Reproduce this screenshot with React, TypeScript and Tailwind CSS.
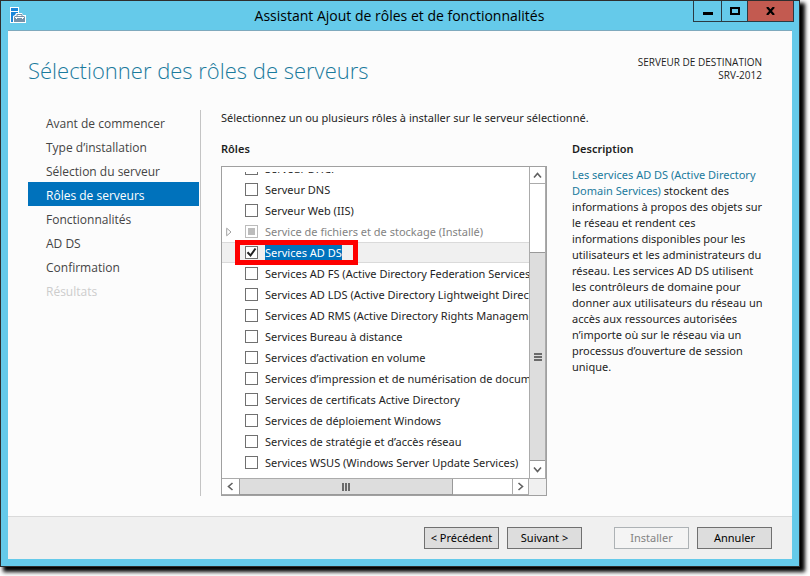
import { useState } from 'react';
import type { ReactNode } from 'react';

interface Role {
    id: string;
    label: string;
    installed?: boolean;
}

const steps = [
    'Avant de commencer',
    'Type d’installation',
    'Sélection du serveur',
    'Rôles de serveurs',
    'Fonctionnalités',
    'AD DS',
    'Confirmation',
    'Résultats',
];

const roles: Role[] = [
    { id: 'dhcp', label: 'Serveur DHCP' },
    { id: 'dns', label: 'Serveur DNS' },
    { id: 'iis', label: 'Serveur Web (IIS)' },
    { id: 'storage', label: 'Service de fichiers et de stockage (Installé)', installed: true },
    { id: 'adds', label: 'Services AD DS' },
    { id: 'adfs', label: 'Services AD FS (Active Directory Federation Services)' },
    { id: 'adlds', label: 'Services AD LDS (Active Directory Lightweight Directory Services)' },
    { id: 'adrms', label: 'Services AD RMS (Active Directory Rights Management Services)' },
    { id: 'rds', label: 'Services Bureau à distance' },
    { id: 'activation', label: 'Services d’activation en volume' },
    { id: 'print', label: 'Services d’impression et de numérisation de documents' },
    { id: 'adcs', label: 'Services de certificats Active Directory' },
    { id: 'wds', label: 'Services de déploiement Windows' },
    { id: 'npas', label: 'Services de stratégie et d’accès réseau' },
    { id: 'wsus', label: 'Services WSUS (Windows Server Update Services)' },
];

const ServerIcon = () => (
    <svg width="16" height="16" viewBox="0 0 16 16" aria-hidden="true">
        <path d="M0 0h9v6h3l1 2h3v8H0z" fill="#fff" />
        <path d="M1 1h7v3H1zM1 5h7v1H6L5 8 3 9v6H1z" fill="#1a86d9" />
        <path d="M5 9h9l1 1v5H4v-5z" fill="#7592aa" />
        <path d="M7 9V7.5h5V9" fill="none" stroke="#7592aa" />
        <path d="M5 10.5h9M6.5 10v2M12.5 10v2" stroke="#fff" />
    </svg>
);

const Chevron = ({ d }: { d: string }) => (
    <svg width="9" height="9" viewBox="0 0 9 9" fill="none" stroke="#606060" strokeWidth="1.6" aria-hidden="true">
        <path d={d} />
    </svg>
);

const ScrollButton = ({ label, d, className }: { label: string; d: string; className: string }) => (
    <button
        type="button"
        aria-label={label}
        className={`flex shrink-0 items-center justify-center border-[#ababab] bg-white ${className}`}
    >
        <Chevron d={d} />
    </button>
);

const DialogButton = ({ children, disabled }: { children: ReactNode; disabled?: boolean }) => (
    <button
        type="button"
        disabled={disabled}
        className="flex h-[22px] w-[75px] items-center justify-center whitespace-nowrap border border-[#707070] bg-[#dddddd] text-black disabled:border-[#adb2b5] disabled:bg-[#f4f4f4] disabled:text-[#838383]"
    >
        {children}
    </button>
);

// Title bar with the caption buttons
const TitleBar = () => (
    <header className="flex h-[29px] items-start pl-[9px] pr-[5px]">
        <div className="mt-1.5 w-24">
            <ServerIcon />
        </div>
        <h1 className="mt-1 flex-1 text-center font-['Open_Sans','Segoe_UI',sans-serif] text-[14px] leading-[22px] text-black">
            Assistant Ajout de rôles et de fonctionnalités
        </h1>
        <div className="flex h-[21px] border-x border-b border-[#2b3a42]">
            <button type="button" aria-label="Réduire" className="flex w-7 items-center justify-center border-r border-[#2b3a42]">
                <span className="mt-1 h-[3px] w-2.5 bg-black" />
            </button>
            <button type="button" aria-label="Agrandir" className="flex w-[26px] items-center justify-center border-r border-[#2b3a42]">
                <span className="h-2 w-2.5 border-2 border-black" />
            </button>
            <button type="button" aria-label="Fermer" className="flex w-[45px] items-center justify-center bg-[#c35a50]">
                <svg width="9" height="8" viewBox="0 0 9 8" stroke="#000" strokeWidth="2.2" aria-hidden="true">
                    <path d="M1 0l7 8M8 0L1 8" />
                </svg>
            </button>
        </div>
    </header>
);

const RoleRow = ({ role, checked, onToggle }: { role: Role; checked: boolean; onToggle: () => void }) => {
    const selected = role.id === 'adds';

    return (
        <li
            className={`relative flex h-[21px] shrink-0 items-center border-y pl-1 ${
                selected ? 'border-[#dadada] bg-[#f0f0f0]' : 'border-transparent'
            }`}
        >
            <span className="w-[19px] shrink-0">
                {role.installed && (
                    <svg width="6" height="10" viewBox="0 0 6 10" fill="#fff" stroke="#a0a0a0" aria-hidden="true">
                        <path d="M.7 1.2v7.6L5 5z" />
                    </svg>
                )}
            </span>
            <span className="relative flex size-[13px] shrink-0">
                <input
                    id={role.id}
                    type="checkbox"
                    checked={checked}
                    disabled={role.installed}
                    onChange={onToggle}
                    className="size-[13px] appearance-none border border-[#707070] bg-white disabled:border-[#bcbcbc]"
                />
                {role.installed && <span className="pointer-events-none absolute inset-[3px] bg-[#bcbcbc]" />}
                {checked && (
                    <svg
                        className="pointer-events-none absolute inset-0"
                        width="13"
                        height="13"
                        viewBox="0 0 13 13"
                        fill="none"
                        stroke="#212121"
                        strokeWidth="2"
                        aria-hidden="true"
                    >
                        <path d="M2.5 6.3l3 3.2 5-7" />
                    </svg>
                )}
            </span>
            <label
                htmlFor={role.id}
                className={`ml-[7px] whitespace-nowrap leading-4 ${
                    selected ? 'bg-[#0072bc] text-white' : role.installed ? 'text-[#838383]' : 'text-[#1e1e1e]'
                }`}
            >
                {role.label}
            </label>
            {selected && (
                <span className="pointer-events-none absolute -top-[3px] left-[13px] h-[25px] w-[123px] border-5 border-[#fe0000]" />
            )}
        </li>
    );
};

const RoleList = () => {
    const [checked, setChecked] = useState<string[]>(['adds']);

    const toggle = (id: string) =>
        setChecked((prev) => (prev.includes(id) ? prev.filter((x) => x !== id) : [...prev, id]));

    return (
        <div className="border border-[#a0a0a0] bg-white">
            <div className="flex">
                <div className="min-w-0 flex-1 py-[5px]">
                    {/* scrolled to the end, so the first row is cut off */}
                    <ul className="flex h-[301px] flex-col justify-end overflow-hidden">
                        {roles.map((role) => (
                            <RoleRow
                                key={role.id}
                                role={role}
                                checked={checked.includes(role.id)}
                                onToggle={() => toggle(role.id)}
                            />
                        ))}
                    </ul>
                </div>
                <div className="flex w-[17px] flex-col border-x border-[#ababab]">
                    <ScrollButton label="Haut" d="M1 6.5L4.5 2.5 8 6.5" className="h-[17px] border-b" />
                    <div className="h-[68px]" />
                    <div className="flex flex-1 flex-col items-center justify-center gap-px border-y border-[#999999] bg-[#dddddd]">
                        <span className="h-0.5 w-2 bg-[#6a6a6a]" />
                        <span className="h-0.5 w-2 bg-[#6a6a6a]" />
                        <span className="h-0.5 w-2 bg-[#6a6a6a]" />
                    </div>
                    <ScrollButton label="Bas" d="M1 2.5L4.5 6.5 8 2.5" className="h-[17px]" />
                </div>
            </div>
            <div className="flex h-[17px] border-t border-[#ababab]">
                <ScrollButton label="Gauche" d="M6.5 1L2.5 4.5 6.5 8" className="w-[17px] border-b" />
                <div className="flex w-[214px] items-center justify-center gap-px border border-t-0 border-[#999999] bg-[#dddddd]">
                    <span className="h-2 w-0.5 bg-[#6a6a6a]" />
                    <span className="h-2 w-0.5 bg-[#6a6a6a]" />
                    <span className="h-2 w-0.5 bg-[#6a6a6a]" />
                </div>
                <div className="flex-1 border-b border-[#ababab]" />
                <ScrollButton label="Droite" d="M2.5 1L6.5 4.5 2.5 8" className="w-[17px] border-x border-b" />
                <div className="w-[17px] bg-[#f0f0f0]" />
            </div>
        </div>
    );
};

const App = () => {
    return (
        <div className="flex min-h-screen overflow-hidden bg-white pb-[9px] pr-2.5 font-['Noto_Sans','Segoe_UI',sans-serif] text-[11px] leading-4 text-[#1e1e1e]">
            <div className="flex min-w-0 flex-1 flex-col border border-[#2e2e2e] bg-[#65caea] shadow-[4px_4px_4px_1px_#000000]">
                <TitleBar />
                <div className="mx-[7px] mb-[7px] flex flex-1 flex-col border-t border-[#7fa9bd] bg-[#fcfcfc]">
                    <div className="flex items-start justify-between pb-6 pl-5 pr-[30px] pt-[23px] font-['Open_Sans','Segoe_UI',sans-serif]">
                        <h2 className="text-[22px] font-light leading-8 text-[#1a7a9c]">
                            Sélectionner des rôles de serveurs
                        </h2>
                        <p className="pt-0.5 text-right text-[10px] leading-[13px]">
                            SERVEUR DE DESTINATION
                            <br />
                            SRV-2012
                        </p>
                    </div>

                    <div className="flex flex-1 pb-5 pl-5">
                        <nav className="w-[173px] shrink-0 border-r border-[#c4c4c4] pr-px font-['Open_Sans','Segoe_UI',sans-serif] text-[12px]">
                            <ul>
                                {steps.map((step) => (
                                    <li key={step}>
                                        <a
                                            href="#"
                                            className={`block h-6 pl-[18px] leading-7 ${
                                                step === 'Rôles de serveurs'
                                                    ? 'bg-[#0072bc] text-white'
                                                    : step === 'Résultats'
                                                      ? 'text-[#cccccc]'
                                                      : 'text-[#444444]'
                                            }`}
                                        >
                                            {step}
                                        </a>
                                    </li>
                                ))}
                            </ul>
                        </nav>

                        <main className="min-w-0 flex-1 pl-5 pr-[22px]">
                            <p>Sélectionnez un ou plusieurs rôles à installer sur le serveur sélectionné.</p>
                            <div className="mt-[15px] flex gap-[25px]">
                                <section className="min-w-0 flex-1">
                                    <h3 className="mb-[9px] font-semibold">Rôles</h3>
                                    <RoleList />
                                </section>
                                <section className="w-[198px] shrink-0">
                                    <h3 className="mb-2.5 font-semibold">Description</h3>
                                    <p>
                                        <a href="#" className="text-[#1a7a9c]">
                                            Les services AD DS (Active Directory
                                            <br />
                                            Domain Services)
                                        </a>{' '}
                                        stockent des
                                        <br />
                                        informations à propos des objets sur
                                        <br />
                                        le réseau et rendent ces
                                        <br />
                                        informations disponibles pour les
                                        <br />
                                        utilisateurs et les administrateurs du
                                        <br />
                                        réseau. Les services AD DS utilisent
                                        <br />
                                        les contrôleurs de domaine pour
                                        <br />
                                        donner aux utilisateurs du réseau un
                                        <br />
                                        accès aux ressources autorisées
                                        <br />
                                        n’importe où sur le réseau via un
                                        <br />
                                        processus d’ouverture de session
                                        <br />
                                        unique.
                                    </p>
                                </section>
                            </div>
                        </main>
                    </div>

                    <footer className="flex justify-end gap-2 border-t border-[#dadada] bg-[#f0f0f0] py-2.5 pr-5">
                        <DialogButton>&lt; Précédent</DialogButton>
                        <DialogButton>Suivant &gt;</DialogButton>
                        <div className="w-4" />
                        <DialogButton disabled>Installer</DialogButton>
                        <DialogButton>Annuler</DialogButton>
                    </footer>
                </div>
            </div>
        </div>
    );
};

export default App;
